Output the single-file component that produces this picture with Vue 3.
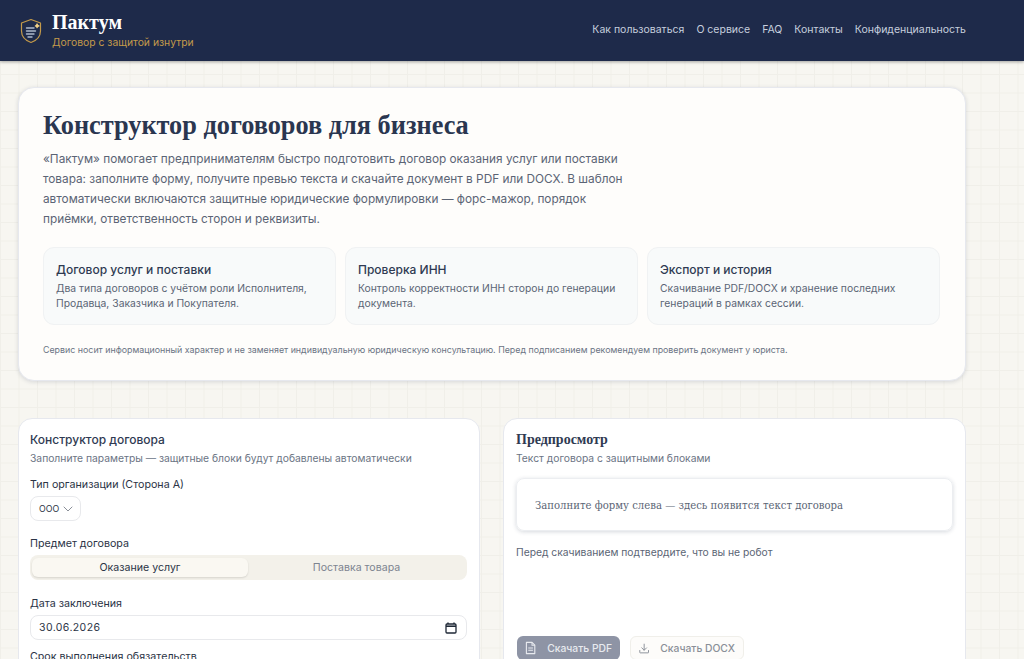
<template>
	<div class="page">
		<header class="topbar">
			<div class="brand">
				<svg class="brand-icon" width="22" height="26" viewBox="0 0 22 26" fill="none">
					<path d="M11 1.5 L20.5 5 V13 C20.5 18.5 16.5 22.5 11 24.5 C5.5 22.5 1.5 18.5 1.5 13 V5 Z" stroke="#c49a4a" stroke-width="1.2" stroke-linejoin="round" />
					<path d="M6.5 10 H14 M6.5 13 H15.5 M6.5 16 H14 M8 19 H12" stroke="#aeb9cc" stroke-width="1.4" stroke-linecap="round" />
					<path d="M17 5 L18.2 6.8 L20 8 L18.2 9 L17 10.5 L16 9 L14.5 8 L16 6.8 Z" fill="#f1cf86" />
				</svg>
				<div>
					<div class="brand-name">Пактум</div>
					<div class="brand-sub">Договор с защитой изнутри</div>
				</div>
			</div>
			<nav class="nav">
				<a v-for="link in links" :key="link">{{ link }}</a>
			</nav>
		</header>

		<main class="content">
			<section class="hero">
				<h1>Конструктор договоров для бизнеса</h1>
				<p class="lead">
					«Пактум» помогает предпринимателям быстро подготовить договор оказания услуг или поставки
					товара: заполните форму, получите превью текста и скачайте документ в PDF или DOCX. В шаблон
					автоматически включаются защитные юридические формулировки — форс-мажор, порядок
					приёмки, ответственность сторон и реквизиты.
				</p>
				<div class="features">
					<div class="feature" v-for="item in features" :key="item.title">
						<h3>{{ item.title }}</h3>
						<p>{{ item.text }}</p>
					</div>
				</div>
				<p class="note">
					Сервис носит информационный характер и не заменяет индивидуальную юридическую консультацию. Перед подписанием рекомендуем проверить документ у юриста.
				</p>
			</section>

			<div class="columns">
				<section class="panel form-panel">
					<h2>Конструктор договора</h2>
					<p class="panel-sub">Заполните параметры — защитные блоки будут добавлены автоматически</p>

					<div class="field first">
						<label>Тип организации (Сторона А)</label>
						<div class="select">
							<span>ООО</span>
							<svg width="10" height="6" viewBox="0 0 10 6" fill="none">
								<path d="M1 1 L5 5 L9 1" stroke="#8a8f98" stroke-width="1" stroke-linecap="round" stroke-linejoin="round" />
							</svg>
						</div>
					</div>

					<div class="field">
						<label>Предмет договора</label>
						<div class="tabs">
							<div class="tab active">Оказание услуг</div>
							<div class="tab">Поставка товара</div>
						</div>
					</div>

					<div class="field date-field">
						<label>Дата заключения</label>
						<div class="input">
							<span class="date">30.06.2026</span>
							<svg width="12" height="12" viewBox="0 0 12 12" fill="none">
								<path d="M3 .5 V2 M9 .5 V2" stroke="#1f2937" stroke-width="1.4" />
								<rect x="1" y="2" width="10" height="9" rx="1" stroke="#1f2937" stroke-width="1.3" />
								<path d="M1 4.2 H11" stroke="#1f2937" stroke-width="1.6" />
							</svg>
						</div>
					</div>

					<div class="field last">
						<label>Срок выполнения обязательств</label>
						<div class="input"></div>
					</div>
				</section>

				<section class="panel preview-panel">
					<h2 class="serif">Предпросмотр</h2>
					<p class="panel-sub">Текст договора с защитными блоками</p>
					<div class="preview-box">Заполните форму слева — здесь появится текст договора</div>
					<p class="captcha-text">Перед скачиванием подтвердите, что вы не робот</p>
					<div class="actions">
						<button class="btn primary" disabled>
							<svg width="12" height="14" viewBox="0 0 12 14" fill="none">
								<path d="M1.5 1 H7.5 L10.5 4 V13 H1.5 Z" stroke="#e8eaef" stroke-width="1.2" stroke-linejoin="round" />
								<path d="M7.5 1 V4 H10.5 M3.5 7 H8.5 M3.5 9.5 H8.5" stroke="#e8eaef" stroke-width="1.1" />
							</svg>
							Скачать PDF
						</button>
						<button class="btn ghost" disabled>
							<svg width="13" height="13" viewBox="0 0 13 13" fill="none">
								<path d="M6.5 1 V8.5 M3.5 5.7 L6.5 8.7 L9.5 5.7 M1 9 V11.5 C1 11.8 1.2 12 1.5 12 H11.5 C11.8 12 12 11.8 12 11.5 V9" stroke="#8a8f98" stroke-width="1.2" stroke-linecap="round" stroke-linejoin="round" />
							</svg>
							Скачать DOCX
						</button>
					</div>
				</section>
			</div>
		</main>
	</div>
</template>

<script setup>
const links = ["Как пользоваться", "О сервисе", "FAQ", "Контакты", "Конфиденциальность"];
const features = [
	{
		title: "Договор услуг и поставки",
		text: "Два типа договоров с учётом роли Исполнителя, Продавца, Заказчика и Покупателя.",
	},
	{
		title: "Проверка ИНН",
		text: "Контроль корректности ИНН сторон до генерации документа.",
	},
	{
		title: "Экспорт и история",
		text: "Скачивание PDF/DOCX и хранение последних генераций в рамках сессии.",
	},
];
</script>

<style>
html,
body {
	margin: 0;
	overflow: hidden;
}
</style>

<style scoped>
.page {
	font-family: Inter, "Noto Sans", sans-serif;
	color: #1e2a44;
	height: 659px;
	overflow: hidden;
	background-color: #f7f6f1;
	background-image: linear-gradient(#f0efe9 1px, transparent 1px), linear-gradient(90deg, #f0efe9 1px, transparent 1px);
	background-size: 18.5px 18.5px;
}
.topbar {
	height: 61px;
	box-sizing: border-box;
	padding: 0 58px 0 20px;
	background: #1e2a4a;
	box-shadow: 0 1px 3px rgba(0, 0, 0, 0.35);
	display: flex;
	align-items: center;
	justify-content: space-between;
}
.brand {
	display: flex;
	align-items: center;
	gap: 10px;
}
.brand-icon {
	margin-top: 1px;
}
.brand-name {
	font-family: "Liberation Serif", serif;
	font-weight: 700;
	font-size: 20px;
	line-height: 22px;
	color: #fff;
}
.brand-sub {
	font-size: 10.35px;
	line-height: 16px;
	margin-top: 1px;
	color: #c49a4a;
}
.nav {
	display: flex;
	gap: 12px;
	font-size: 10.5px;
	margin-top: -3px;
	color: #c6cfde;
}
.content {
	padding: 26px 58px 0 18px;
}
.hero {
	background: #fefdfb;
	border: 1px solid #e6e8ee;
	border-radius: 16px;
	padding: 24px;
	height: 294px;
	box-sizing: border-box;
	box-shadow: 0 1px 4px rgba(30, 42, 74, 0.15);
}
h1 {
	font-family: "Liberation Serif", serif;
	font-size: 26.3px;
	line-height: 28px;
	font-weight: 700;
	margin: 0 0 9px;
	color: #2a3650;
}
.lead {
	margin: 0;
	width: 600px;
	font-size: 11.8px;
	line-height: 20px;
	color: #5b6475;
}
.features {
	display: grid;
	grid-template-columns: repeat(3, 293px);
	gap: 9px;
	margin-top: 18px;
}
.feature {
	background: #f8fafa;
	border: 1px solid #f0f2f3;
	border-radius: 11px;
	height: 78px;
	box-sizing: border-box;
	padding: 13px 12px;
}
.feature h3 {
	margin: 0;
	font-size: 12px;
	line-height: 18px;
	font-weight: 500;
	color: #2f3a52;
}
.feature p {
	margin: 2px 0 0;
	font-size: 10.35px;
	line-height: 15px;
	color: #5b6575;
}
.note {
	margin: 18px 0 0;
	font-size: 8.85px;
	line-height: 13px;
	color: #6b7484;
}
.columns {
	display: grid;
	grid-template-columns: 462px 463px;
	gap: 23px;
	margin-top: 37px;
	align-items: start;
}
.panel {
	background: #fff;
	border: 1px solid #e6e8ee;
	border-radius: 14px;
	padding: 12px;
	height: 400px;
	box-sizing: border-box;
}
.form-panel {
	padding-left: 11px;
	padding-right: 12px;
}
h2 {
	margin: 0;
	font-size: 12px;
	line-height: 18px;
	font-weight: 500;
	color: #2f3a52;
}
h2.serif {
	font-family: "Liberation Serif", serif;
	font-size: 14px;
	font-weight: 700;
}
.panel-sub {
	margin: 1px 0 0;
	font-size: 10.3px;
	line-height: 16px;
	color: #6b7484;
}
.field {
	margin-top: 15px;
}
.field.first {
	margin-top: 11px;
}
.field.date-field {
	margin-top: 16px;
}
.field.last {
	margin-top: 9px;
}
.field label {
	display: block;
	font-size: 10.7px;
	line-height: 16px;
	color: #2b3446;
	margin-bottom: 3px;
}
.select {
	width: 51px;
	height: 25px;
	box-sizing: border-box;
	border: 1px solid #e8e9ec;
	border-radius: 8px;
	display: flex;
	align-items: center;
	justify-content: space-between;
	padding: 0 7px 0 8px;
	font-size: 8.8px;
	color: #2b3446;
}
.tabs {
	display: flex;
	height: 25px;
	box-sizing: border-box;
	padding: 3px 2px;
	background: #f3f1ea;
	border-radius: 8px;
}
.tab {
	flex: 1;
	display: flex;
	align-items: center;
	justify-content: center;
	font-size: 10.6px;
	color: #7d8490;
}
.tab.active {
	flex: none;
	width: 216px;
	background: #faf8f2;
	border-radius: 6px;
	color: #2b3446;
	box-shadow: 0 1px 2px rgba(0, 0, 0, 0.12);
}
.input {
	height: 25px;
	box-sizing: border-box;
	border: 1px solid #e8e9ec;
	border-radius: 8px;
	display: flex;
	align-items: center;
	justify-content: space-between;
	padding: 0 9px 0 8px;
}
.date {
	font-size: 10.5px;
	letter-spacing: 0.4px;
	color: #2b3446;
}
.preview-box {
	margin-top: 12px;
	height: 53px;
	box-sizing: border-box;
	padding: 1px 18px 0;
	display: flex;
	align-items: center;
	font-family: "DejaVu Serif", serif;
	font-size: 10.1px;
	color: #5b6575;
	border: 1px solid #eceef1;
	border-radius: 8px;
	box-shadow: 0 1px 4px rgba(30, 42, 74, 0.18);
}
.captcha-text {
	margin: 13px 0 0;
	font-size: 10.3px;
	line-height: 16px;
	color: #5b6575;
}
.actions {
	display: flex;
	gap: 10px;
	margin-top: 76px;
	padding-left: 1px;
}
.btn {
	height: 24px;
	font-family: inherit;
	font-size: 10.3px;
	font-weight: 500;
	white-space: nowrap;
	display: flex;
	align-items: center;
	gap: 11px;
	border-radius: 6px;
	padding: 0 8px;
	border: 0;
}
.btn.primary {
	width: 103px;
	background: #8e94a5;
	color: #e8eaef;
}
.btn.ghost {
	width: 114px;
	background: #fdfcfa;
	border: 1px solid #f0efea;
	color: #8a8f98;
}
</style>
